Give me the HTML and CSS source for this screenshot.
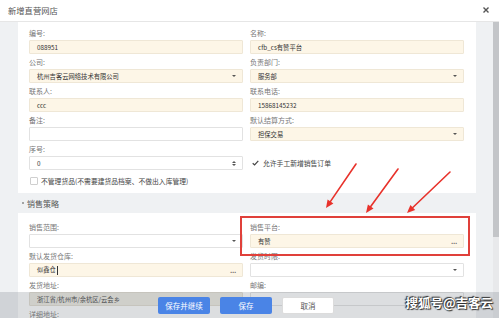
FILE: index.html
```html
<!DOCTYPE html>
<html lang="zh-CN">
<head>
    <meta charset="UTF-8">
    <title>新增直营网店</title>
    <link rel="stylesheet" href="styles.css">
</head>
<body>
<div class="dialog">
    <!--头部-->
    <div class="dlg-head">
        <span class="title">新增直营网店</span>
        <svg class="close" width="6" height="6" viewBox="0 0 6 6"><path d="M0.5 0.5L5.5 5.5M5.5 0.5L0.5 5.5" stroke="#555" stroke-width="1.4"/></svg>
    </div>

    <!--内容-->
    <div class="dlg-body">
        <div class="content">
            <div class="card card-base">
                <div class="grid">
                    <div class="field">
                        <div class="lbl">编号:</div>
                        <div class="ipt cream">088951</div>
                    </div>
                    <div class="field">
                        <div class="lbl">名称:</div>
                        <div class="ipt cream">cfb_cs有赞平台</div>
                    </div>
                    <div class="field">
                        <div class="lbl">公司:</div>
                        <div class="ipt cream">杭州吉客云网络技术有限公司<span class="caret"></span></div>
                    </div>
                    <div class="field">
                        <div class="lbl">负责部门:</div>
                        <div class="ipt cream">服务部<span class="caret"></span></div>
                    </div>
                    <div class="field">
                        <div class="lbl">联系人:</div>
                        <div class="ipt cream">ccc</div>
                    </div>
                    <div class="field">
                        <div class="lbl">联系电话:</div>
                        <div class="ipt cream">15868145232</div>
                    </div>
                    <div class="field">
                        <div class="lbl">备注:</div>
                        <div class="ipt"></div>
                    </div>
                    <div class="field">
                        <div class="lbl">默认结算方式:</div>
                        <div class="ipt cream">担保交易<span class="caret"></span></div>
                    </div>
                    <div class="field">
                        <div class="lbl">序号:</div>
                        <div class="ipt">0<span class="spin"><i class="up"></i><i class="down"></i></span></div>
                    </div>
                    <div class="field field-check">
                        <div class="check-row">
                            <svg class="tick" width="7" height="6" viewBox="0 0 7 6"><path d="M0.7 3.2L2.6 5L6.3 0.8" fill="none" stroke="#444" stroke-width="1.2"/></svg>
                            <span>允许手工新增销售订单</span>
                        </div>
                    </div>
                </div>
                <div class="check-row check-wide">
                    <span class="box"></span>
                    <span>不管理货品(不需要建货品档案、不做出入库管理)</span>
                </div>
            </div>

            <div class="section-title"><span class="dot"></span>销售策略</div>

            <div class="card card-sale">
                <div class="grid">
                    <div class="field">
                        <div class="lbl">销售范围:</div>
                        <div class="ipt"><span></span><span class="caret"></span></div>
                    </div>
                    <div class="field">
                        <div class="lbl">销售平台:</div>
                        <div class="ipt cream">有赞<span class="more">...</span></div>
                    </div>
                    <div class="field">
                        <div class="lbl">默认发货仓库:</div>
                        <div class="ipt cream"><span>似鑫仓<span class="cursor"></span></span><span class="more">...</span></div>
                    </div>
                    <div class="field">
                        <div class="lbl">发货时限:</div>
                        <div class="ipt"><span></span><span class="caret"></span></div>
                    </div>
                    <div class="field">
                        <div class="lbl">发货地址:</div>
                        <div class="ipt disabled">浙江省/杭州市/余杭区/云会乡</div>
                    </div>
                    <div class="field">
                        <div class="lbl">邮编:</div>
                        <div class="ipt"></div>
                    </div>
                    <div class="field">
                        <div class="lbl">详细地址:</div>
                        <div class="ipt"></div>
                    </div>
                </div>
            </div>
        </div>
        <!--滚动条-->
        <div class="scrollbar"><div class="thumb"></div></div>
    </div>

    <!--底部按钮-->
    <div class="dlg-foot">
        <a href="#" class="btn btn-primary">保存并继续</a>
        <a href="#" class="btn btn-primary">保存</a>
        <a href="#" class="btn btn-default">取消</a>
    </div>

    <!--标注-->
    <div class="highlight"></div>
    <svg class="arrows" width="499" height="318" viewBox="0 0 499 318">
        <g stroke="#e8322b" stroke-width="1.6" stroke-linecap="round">
            <line x1="356" y1="164" x2="330.5" y2="201.4"/>
            <line x1="398" y1="169" x2="370.7" y2="206.5"/>
            <line x1="450" y1="172" x2="412.8" y2="207.5"/>
        </g>
        <g fill="#e8322b">
            <polygon points="326,208 327.6,199.4 333.4,203.4"/>
            <polygon points="366,213 367.9,204.5 373.5,208.6"/>
            <polygon points="407,213 410.4,205 415.2,210"/>
        </g>
    </svg>
    <div class="watermark">搜狐号@吉客云</div>
</div>
</body>
</html>
```

FILE: styles.css
```css
*{
    margin: 0;
    padding: 0;
    box-sizing: border-box;
}

body{
    width: 499px;
    height: 318px;
    overflow: hidden;
    font-family: "Noto Sans CJK SC", "Noto Sans", sans-serif;
    color: #333;
    background-color: #fff;
}

.dialog{
    /*定位约束*/
    position: relative;
    width: 499px;
    height: 318px;
    overflow: hidden;
}

/*头部*/
.dlg-head{
    height: 22px;
    display: flex;
    justify-content: space-between;
    align-items: center;
    padding: 0 10px 1px 8px;
    border-bottom: 1px solid #e6e6e6;
    background-color: #fff;
}

.title{
    font-size: 8.3px;
    color: #555;
}

/*内容*/
.dlg-body{
    display: flex;
    height: 296px;
    background-color: #eff1f3;
}

.content{
    flex: 1;
    padding: 0 17px 0 18px;
}

.scrollbar{
    width: 6px;
    background-color: #e8e9eb;
}

.scrollbar .thumb{
    height: 215px;
    background-color: #c3c5c8;
}

.card{
    background-color: #fff;
}

.card-base{
    padding: 6px 12px 4px 11px;
}

.card-sale{
    padding: 9px 12px 10px 11px;
}

.grid{
    display: grid;
    grid-template-columns: 214px 214px;
    column-gap: 7px;
}

.field{
    padding-bottom: 3px;
}

.lbl{
    height: 10px;
    line-height: 10px;
    margin-bottom: 2px;
    font-size: 7px;
    color: #777;
}

.ipt{
    height: 14px;
    display: flex;
    justify-content: space-between;
    align-items: center;
    padding: 0 6px 0 7px;
    border: 1px solid #e2e2e2;
    border-radius: 1px;
    background-color: #fff;
    font-size: 6.3px;
    color: #333;
}

.ipt.cream{
    background-color: #fdf6e7;
    border-color: #efe7d6;
}

.ipt.disabled{
    background-color: #eeebe3;
    border-color: #e2ddd2;
    color: #444;
}

.caret{
    width: 0;
    height: 0;
    border-left: 2px solid transparent;
    border-right: 2px solid transparent;
    border-top: 2.5px solid #555;
}

.spin{
    display: flex;
    flex-direction: column;
    gap: 1px;
}

.spin i{
    width: 0;
    height: 0;
    border-left: 2px solid transparent;
    border-right: 2px solid transparent;
}

.spin .up{
    border-bottom: 2.5px solid #555;
}

.spin .down{
    border-top: 2.5px solid #555;
}

.more{
    font-size: 7px;
    font-weight: bold;
    color: #555;
    letter-spacing: -0.3px;
    line-height: 6px;
}

.cursor{
    display: inline-block;
    width: 1px;
    height: 9px;
    margin-left: 1px;
    vertical-align: middle;
    background-color: #333;
}

/*勾选*/
.field-check{
    padding-top: 12px;
}

.check-row{
    height: 14px;
    display: flex;
    align-items: center;
    gap: 4px;
    padding-left: 2px;
    font-size: 6.8px;
    color: #444;
}

.check-wide{
    height: 16px;
    padding-left: 1px;
    gap: 3px;
}

.check-row .box{
    width: 8px;
    height: 8px;
    border: 1px solid #cfcfcf;
    border-radius: 1px;
    background-color: #fff;
}

.section-title{
    height: 20px;
    display: flex;
    align-items: center;
    gap: 3px;
    padding-left: 4px;
    font-size: 8px;
    color: #555;
}

.section-title .dot{
    width: 2px;
    height: 2px;
    border-radius: 50%;
    background-color: #888;
}

/*底部*/
.dlg-foot{
    position: absolute;
    left: 0;
    right: 0;
    bottom: 0;
    height: 26px;
    display: flex;
    align-items: center;
    gap: 10px;
    padding-left: 158px;
    background-color: rgba(110, 115, 125, 0.24);
}

.btn{
    width: 52px;
    height: 17px;
    display: flex;
    justify-content: center;
    align-items: center;
    border-radius: 2px;
    font-size: 7.5px;
    text-decoration: none;
}

.btn-primary{
    background-color: #4a84e6;
    color: #fff;
}

.btn-default{
    background-color: #fff;
    color: #555;
    border: 1px solid #dcdcdc;
}

/*标注*/
.highlight{
    position: absolute;
    left: 240px;
    top: 216px;
    width: 230px;
    height: 40px;
    border: 2px solid #e0403a;
}

.arrows{
    position: absolute;
    left: 0;
    top: 0;
}

.watermark{
    position: absolute;
    right: 6px;
    bottom: 6px;
    font-size: 12.5px;
    font-weight: bold;
    color: #fff;
    text-shadow: 0 0 1px #222, 1px 1px 1px #333, -1px -1px 1px #333;
}
```
